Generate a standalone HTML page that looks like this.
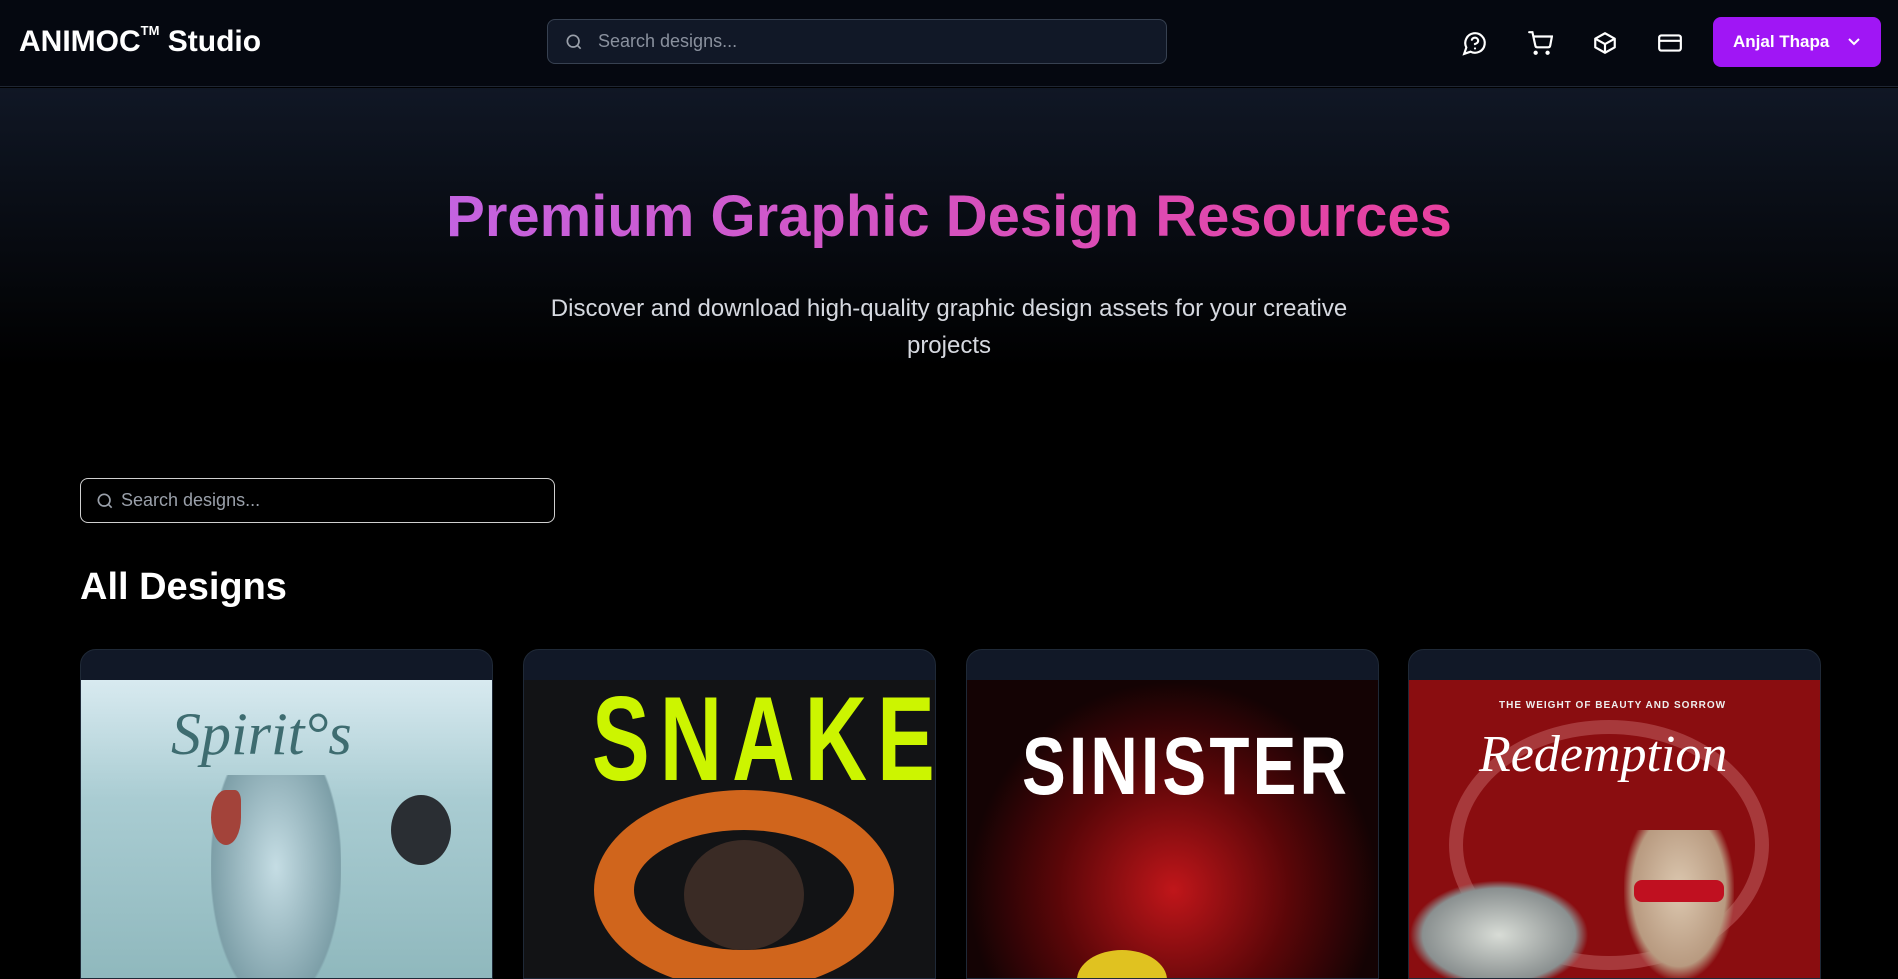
<!DOCTYPE html>
<html><head><meta charset="utf-8">
<style>
*{box-sizing:border-box;margin:0;padding:0}
html,body{width:1898px;height:968px;overflow:hidden;background:#000;font-family:"Liberation Sans",sans-serif;color:#fff}
.hdr{position:absolute;left:0;top:0;width:1898px;height:87px;background:#050810;border-bottom:1px solid #1f2633}
.logo{position:absolute;left:19px;top:25px;font-size:30px;font-weight:bold;letter-spacing:0px}
.logo sup{font-size:13px;vertical-align:top;position:relative;top:-2px}
.search{position:absolute;left:547px;top:19px;width:620px;height:45px;background:#111827;border:1px solid #374151;border-radius:8px;color:#8a919e;font-size:18px;line-height:43px;padding-left:50px}
.search svg,.s2 svg{position:absolute;left:16px;top:12px}
.icons svg{position:absolute;top:30px}
.btn{position:absolute;left:1713px;top:17px;width:168px;height:50px;background:#a016f5;border-radius:8px;font-size:17px;font-weight:bold;line-height:50px;padding-left:20px}
.btn svg{position:absolute;right:20px;top:19px}
.hero{position:absolute;left:0;top:88px;width:1898px;height:280px;background:linear-gradient(#101725,#000)}
h1{position:absolute;left:0;width:1898px;top:183px;text-align:center;font-size:58px;font-weight:bold}
h1 span{background:linear-gradient(90deg,#c463e0,#e8409e);-webkit-background-clip:text;background-clip:text;color:transparent}
.sub{position:absolute;left:524px;width:850px;top:290px;text-align:center;font-size:24px;line-height:37px;color:#d6d9e0}
.s2{position:absolute;left:80px;top:478px;width:475px;height:45px;border:1px solid #d0d0d0;border-radius:8px;color:#9aa0aa;font-size:18px;line-height:43px;padding-left:40px}
.s2 svg{left:14px}
h2{position:absolute;left:80px;top:566px;font-size:38px;font-weight:bold}
.card{position:absolute;top:649px;width:413px;height:330px;background:#111827;border:1px solid #1f2937;border-radius:16px 16px 0 0;overflow:hidden}
.img{position:absolute;left:0;top:30px;width:413px;height:300px;overflow:hidden}
</style></head><body>
<div class="hdr">
 <div class="logo">ANIMOC<sup>TM</sup> Studio</div>
 <div class="search"><svg width="20" height="20" viewBox="0 0 24 24" fill="none" stroke="#9aa0aa" stroke-width="2"><circle cx="11" cy="11" r="7"/><path d="M20 20l-4-4"/></svg>Search designs...</div>
 <div class="icons">
  <svg style="left:1462px" width="26" height="26" viewBox="0 0 24 24" fill="none" stroke="#fff" stroke-width="2" stroke-linecap="round"><path d="M7.9 20A9 9 0 1 0 4 16.1L2 22z"/><path d="M9.1 9a3 3 0 0 1 5.8 1c0 2-3 3-3 3"/><path d="M12 17h.01"/></svg>
  <svg style="left:1527px" width="26" height="26" viewBox="0 0 24 24" fill="none" stroke="#fff" stroke-width="2" stroke-linecap="round"><circle cx="8" cy="21" r="1"/><circle cx="19" cy="21" r="1"/><path d="M2 2h3l2.7 12.4a2 2 0 0 0 2 1.6h9.7a2 2 0 0 0 2-1.6L23 6H6"/></svg>
  <svg style="left:1592px" width="26" height="26" viewBox="0 0 24 24" fill="none" stroke="#fff" stroke-width="2" stroke-linejoin="round"><path d="M21 8l-9-5-9 5v8l9 5 9-5z"/><path d="M3 8l9 5 9-5M12 13v8"/></svg>
  <svg style="left:1657px" width="26" height="26" viewBox="0 0 24 24" fill="none" stroke="#fff" stroke-width="2"><rect x="2" y="5" width="20" height="14" rx="2"/><path d="M2 10h20"/></svg>
 </div>
 <div class="btn">Anjal Thapa<svg width="14" height="12" viewBox="0 0 14 12" fill="none" stroke="#fff" stroke-width="2"><path d="M2 3l5 5 5-5"/></svg></div>
</div>
<div class="hero"></div>
<h1><span>Premium Graphic Design Resources</span></h1>
<div class="sub">Discover and download high-quality graphic design assets for your creative projects</div>
<div class="s2"><svg width="20" height="20" viewBox="0 0 24 24" fill="none" stroke="#9aa0aa" stroke-width="2"><circle cx="11" cy="11" r="7"/><path d="M20 20l-4-4"/></svg>Search designs...</div>
<h2>All Designs</h2>

<div class="card" style="left:80px"><div class="img" style="background:linear-gradient(#d8eaf0,#a9ccd2 40%,#8fb8bd)">
 <div style="position:absolute;left:90px;top:20px;font:italic 60px 'Liberation Serif',serif;color:#3e6c70">Spirit°s</div>
 <div style="position:absolute;left:130px;top:95px;width:130px;height:230px;background:radial-gradient(ellipse at 50% 40%,#c5dde4,#7d9fa8 70%,transparent 72%)"></div>
 <div style="position:absolute;left:130px;top:110px;width:30px;height:55px;background:#a3433a;border-radius:50% 20% 50% 50%"></div>
 <div style="position:absolute;left:310px;top:115px;width:60px;height:70px;background:#2a2e33;border-radius:50%"></div>
</div></div>

<div class="card" style="left:523px"><div class="img" style="background:#121315">
 <div style="position:absolute;left:68px;top:-10px;font:bold 120px 'Liberation Sans Narrow','Liberation Sans',sans-serif;color:#ccf500;letter-spacing:14px;transform:scaleX(0.72);transform-origin:left">SNAKE</div>
 <div style="position:absolute;left:70px;top:110px;width:300px;height:200px;border:40px solid #d0651c;border-radius:50%"></div>
 <div style="position:absolute;left:160px;top:160px;width:120px;height:110px;background:#3a2b25;border-radius:50%"></div>
</div></div>

<div class="card" style="left:966px"><div class="img" style="background:radial-gradient(ellipse at 50% 70%,#c0161a,#5a0608 40%,#140304 70%)">
 <div style="position:absolute;left:55px;top:40px;font:bold 82px 'Liberation Sans Narrow','Liberation Sans',sans-serif;color:#fff;letter-spacing:4px;transform:scaleX(0.8);transform-origin:left">SINISTER</div>
 <div style="position:absolute;left:110px;top:270px;width:90px;height:60px;background:#e0c220;border-radius:50%"></div>
</div></div>

<div class="card" style="left:1408px"><div class="img" style="background:#8a0d10">
 <div style="position:absolute;left:40px;top:40px;width:320px;height:250px;border:14px solid rgba(220,140,140,.35);border-radius:50%"></div>
 <div style="position:absolute;left:70px;top:45px;font:italic 52px 'Liberation Serif',serif;color:#fff">Redemption</div>
 <div style="position:absolute;left:90px;top:20px;font:bold 10px 'Liberation Sans',sans-serif;color:#eee;letter-spacing:1px">THE WEIGHT OF BEAUTY AND SORROW</div>
 <div style="position:absolute;left:0;top:200px;width:180px;height:110px;background:radial-gradient(ellipse,#d8dcd6,#8a9090 60%,transparent 70%)"></div>
 <div style="position:absolute;left:215px;top:150px;width:110px;height:150px;background:radial-gradient(ellipse at 50% 40%,#dcc8b0,#b89a80 60%,transparent 72%)"></div>
 <div style="position:absolute;left:225px;top:200px;width:90px;height:22px;background:#c01020;border-radius:8px"></div>
</div></div>
</body></html>
